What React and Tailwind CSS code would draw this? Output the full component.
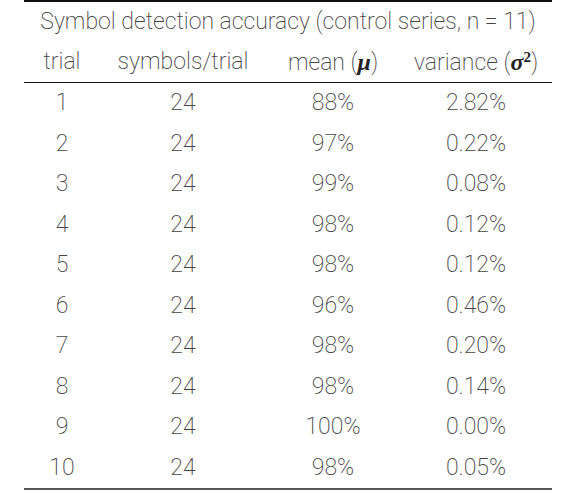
export default function App() {
  const rows = [
    [1, 24, "88%", "2.82%"],
    [2, 24, "97%", "0.22%"],
    [3, 24, "99%", "0.08%"],
    [4, 24, "98%", "0.12%"],
    [5, 24, "98%", "0.12%"],
    [6, 24, "96%", "0.46%"],
    [7, 24, "98%", "0.20%"],
    [8, 24, "98%", "0.14%"],
    [9, 24, "100%", "0.00%"],
    [10, 24, "98%", "0.05%"],
  ];
  const greek = "font-['Liberation_Serif',serif] font-bold italic text-[#222] text-[24px]";
  return (
    <div className="w-[580px] h-[493px] bg-white font-['Roboto',sans-serif] font-extralight text-[23px] text-[#444]">
      <div className="ml-[24px] w-[528px] border-t-2 border-[#111]">
        <div className="h-[40px] flex items-center justify-center">
          Symbol detection accuracy (control series, n = 11)
        </div>
        <div className="h-[41px] grid grid-cols-[76px_166px_134px_152px] items-center text-center border-b border-[#111]">
          <div>trial</div>
          <div>symbols/trial</div>
          <div>
            mean (<span className={greek}>μ</span>)
          </div>
          <div>
            variance (<span className={greek}>σ<sup className="text-[15px] not-italic font-bold">2</sup></span>)
          </div>
        </div>
        <div className="border-b-2 border-[#555]">
          {rows.map((r) => (
            <div
              key={r[0]}
              className="h-[40.5px] grid grid-cols-[76px_166px_134px_152px] items-center text-center"
            >
              <div>{r[0]}</div>
              <div>{r[1]}</div>
              <div>{r[2]}</div>
              <div>{r[3]}</div>
            </div>
          ))}
        </div>
      </div>
    </div>
  );
}
